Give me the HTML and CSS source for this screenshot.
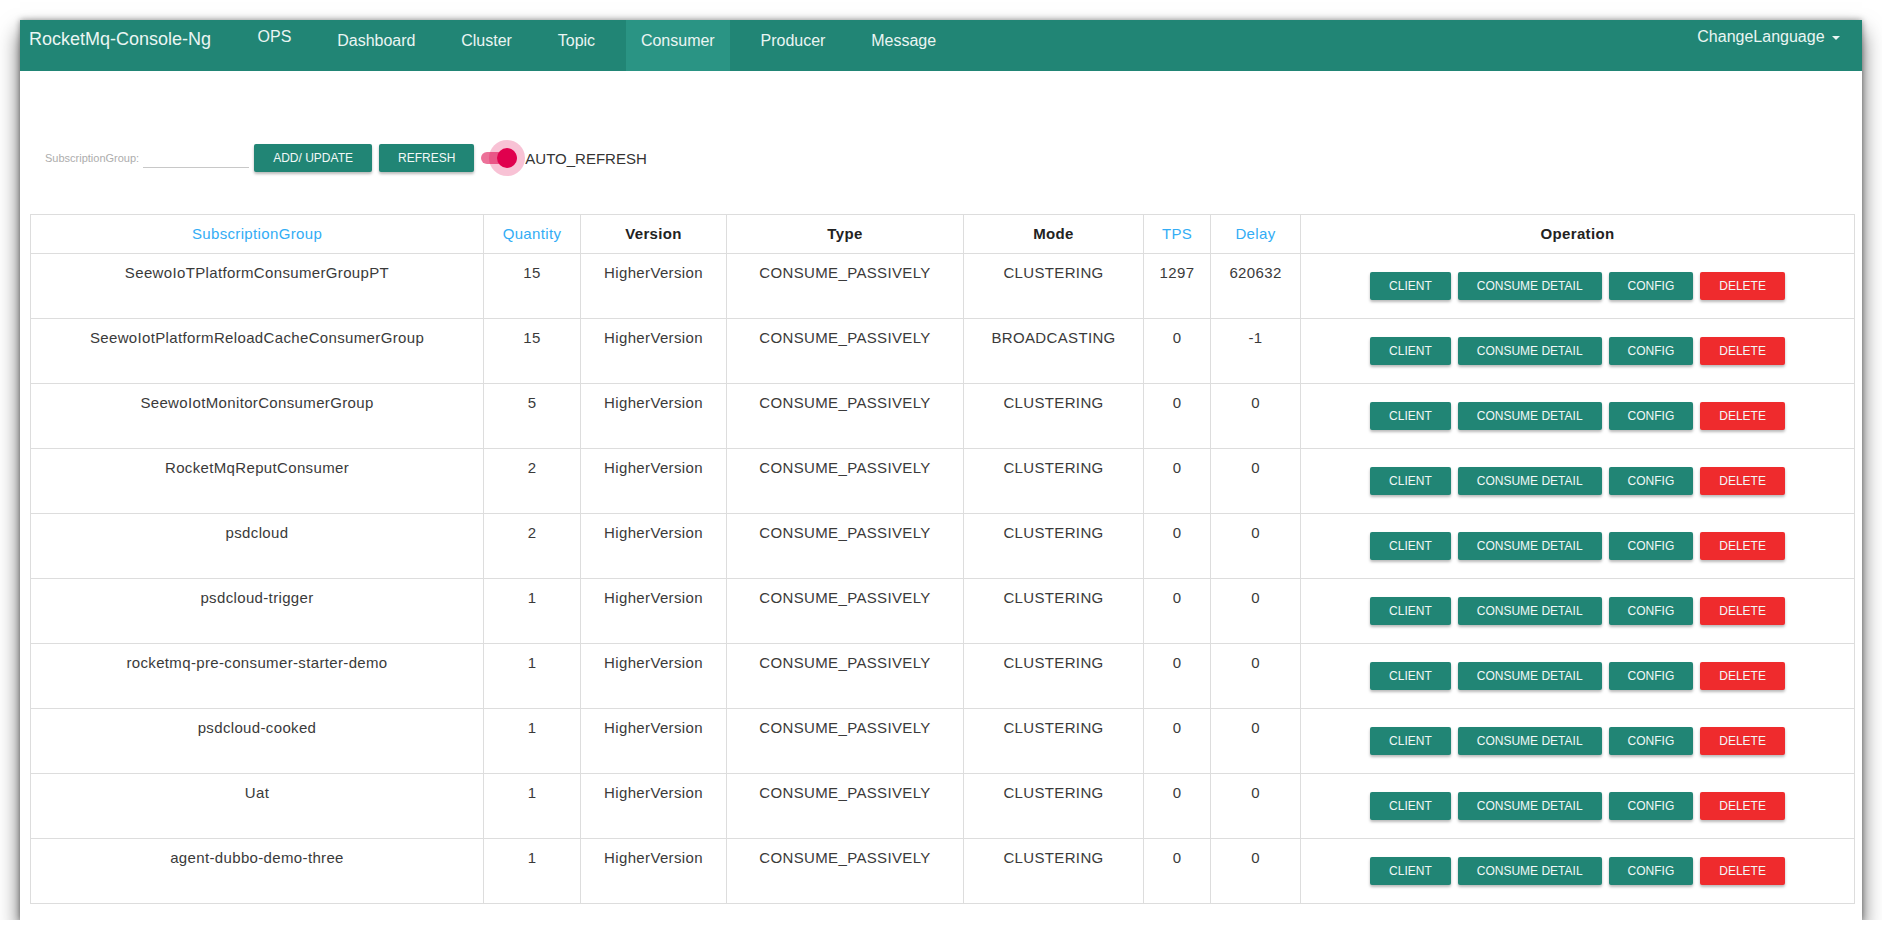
FILE: index.html
```html
<!DOCTYPE html>
<html>
<head>
<meta charset="utf-8">
<link rel="stylesheet" href="styles.css">
</head>
<body>
<div class="window">
  <nav class="navbar">
    <div class="brand">RocketMq-Console-Ng</div>
    <div class="nav-item nav-ops">OPS</div>
    <div class="nav-item">Dashboard</div>
    <div class="nav-item">Cluster</div>
    <div class="nav-item">Topic</div>
    <div class="nav-item active">Consumer</div>
    <div class="nav-item">Producer</div>
    <div class="nav-item">Message</div>
    <div class="nav-right">ChangeLanguage <span class="caret"></span></div>
  </nav>
  <main class="content">
    <div class="toolbar">
      <label class="field-label">SubscriptionGroup:</label>
      <input class="field-input" type="text">
      <button class="btn">ADD/ UPDATE</button>
      <button class="btn">REFRESH</button>
      <div class="switch">
        <div class="switch-track"></div>
        <div class="switch-halo"></div>
        <div class="switch-thumb"></div>
      </div>
      <span class="switch-label">AUTO_REFRESH</span>
    </div>
    <table class="grid">
      <colgroup>
        <col class="c1"><col class="c2"><col class="c3"><col class="c4"><col class="c5"><col class="c6"><col class="c7"><col class="c8">
      </colgroup>
      <thead>
        <tr>
          <th class="sortable">SubscriptionGroup</th>
          <th class="sortable">Quantity</th>
          <th>Version</th>
          <th>Type</th>
          <th>Mode</th>
          <th class="sortable">TPS</th>
          <th class="sortable">Delay</th>
          <th>Operation</th>
        </tr>
      </thead>
      <tbody>
        <tr><td>SeewoIoTPlatformConsumerGroupPT</td><td>15</td><td>HigherVersion</td><td>CONSUME_PASSIVELY</td><td>CLUSTERING</td><td>1297</td><td>620632</td><td class="op"><div class="op-buttons"><button class="btn">CLIENT</button><button class="btn">CONSUME DETAIL</button><button class="btn">CONFIG</button><button class="btn danger">DELETE</button></div></td></tr>
        <tr><td>SeewoIotPlatformReloadCacheConsumerGroup</td><td>15</td><td>HigherVersion</td><td>CONSUME_PASSIVELY</td><td>BROADCASTING</td><td>0</td><td>-1</td><td class="op"><div class="op-buttons"><button class="btn">CLIENT</button><button class="btn">CONSUME DETAIL</button><button class="btn">CONFIG</button><button class="btn danger">DELETE</button></div></td></tr>
        <tr><td>SeewoIotMonitorConsumerGroup</td><td>5</td><td>HigherVersion</td><td>CONSUME_PASSIVELY</td><td>CLUSTERING</td><td>0</td><td>0</td><td class="op"><div class="op-buttons"><button class="btn">CLIENT</button><button class="btn">CONSUME DETAIL</button><button class="btn">CONFIG</button><button class="btn danger">DELETE</button></div></td></tr>
        <tr><td>RocketMqReputConsumer</td><td>2</td><td>HigherVersion</td><td>CONSUME_PASSIVELY</td><td>CLUSTERING</td><td>0</td><td>0</td><td class="op"><div class="op-buttons"><button class="btn">CLIENT</button><button class="btn">CONSUME DETAIL</button><button class="btn">CONFIG</button><button class="btn danger">DELETE</button></div></td></tr>
        <tr><td>psdcloud</td><td>2</td><td>HigherVersion</td><td>CONSUME_PASSIVELY</td><td>CLUSTERING</td><td>0</td><td>0</td><td class="op"><div class="op-buttons"><button class="btn">CLIENT</button><button class="btn">CONSUME DETAIL</button><button class="btn">CONFIG</button><button class="btn danger">DELETE</button></div></td></tr>
        <tr><td>psdcloud-trigger</td><td>1</td><td>HigherVersion</td><td>CONSUME_PASSIVELY</td><td>CLUSTERING</td><td>0</td><td>0</td><td class="op"><div class="op-buttons"><button class="btn">CLIENT</button><button class="btn">CONSUME DETAIL</button><button class="btn">CONFIG</button><button class="btn danger">DELETE</button></div></td></tr>
        <tr><td>rocketmq-pre-consumer-starter-demo</td><td>1</td><td>HigherVersion</td><td>CONSUME_PASSIVELY</td><td>CLUSTERING</td><td>0</td><td>0</td><td class="op"><div class="op-buttons"><button class="btn">CLIENT</button><button class="btn">CONSUME DETAIL</button><button class="btn">CONFIG</button><button class="btn danger">DELETE</button></div></td></tr>
        <tr><td>psdcloud-cooked</td><td>1</td><td>HigherVersion</td><td>CONSUME_PASSIVELY</td><td>CLUSTERING</td><td>0</td><td>0</td><td class="op"><div class="op-buttons"><button class="btn">CLIENT</button><button class="btn">CONSUME DETAIL</button><button class="btn">CONFIG</button><button class="btn danger">DELETE</button></div></td></tr>
        <tr><td>Uat</td><td>1</td><td>HigherVersion</td><td>CONSUME_PASSIVELY</td><td>CLUSTERING</td><td>0</td><td>0</td><td class="op"><div class="op-buttons"><button class="btn">CLIENT</button><button class="btn">CONSUME DETAIL</button><button class="btn">CONFIG</button><button class="btn danger">DELETE</button></div></td></tr>
        <tr><td>agent-dubbo-demo-three</td><td>1</td><td>HigherVersion</td><td>CONSUME_PASSIVELY</td><td>CLUSTERING</td><td>0</td><td>0</td><td class="op"><div class="op-buttons"><button class="btn">CLIENT</button><button class="btn">CONSUME DETAIL</button><button class="btn">CONFIG</button><button class="btn danger">DELETE</button></div></td></tr>
      </tbody>
    </table>
  </main>
</div>
</body>
</html>
```
FILE: styles.css
```css
* { box-sizing: border-box; }
html, body {
  margin: 0;
  padding: 0;
  background: #ffffff;
  font-family: "Liberation Sans", Arial, Helvetica, sans-serif;
}
body { padding: 20px 0 0 20px; }

.window {
  width: 1842px;
  height: 900px;
  background: #ffffff;
  overflow: hidden;
  box-shadow: 0 12px 20px rgba(0, 0, 0, 0.6), 0 0 6px rgba(0, 0, 0, 0.4);
}

/* NAVBAR */
.navbar {
  display: flex;
  align-items: stretch;
  height: 51px;
  background: #218575;
  color: #eaf5f3;
}
.brand {
  flex: none;
  font-size: 18px;
  line-height: 20px;
  padding: 9px 15px 0 9px;
  white-space: nowrap;
}
.nav-item {
  flex: none;
  font-size: 16px;
  line-height: 20px;
  padding: 11px 15px 0 15px;
  margin-left: 15.8px;
  white-space: nowrap;
}
.nav-item.nav-ops { padding-top: 7px; margin-left: 16.5px; }
.nav-item.active { background: #2a9484; }
.nav-right {
  margin-left: auto;
  font-size: 16px;
  line-height: 20px;
  padding: 7px 22px 0 15px;
  white-space: nowrap;
}
.caret {
  display: inline-block;
  width: 0;
  height: 0;
  margin-left: 3px;
  vertical-align: middle;
  border-top: 4px solid #eaf5f3;
  border-left: 4px solid transparent;
  border-right: 4px solid transparent;
}

/* CONTENT */
.content {
  padding: 73px 8px 0 10px;
}
.toolbar {
  display: flex;
  align-items: center;
  height: 28px;
  padding-left: 15px;
}
.field-label {
  font-size: 11px;
  color: #adadad;
}
.field-input {
  width: 106px;
  height: 20px;
  margin: 0 5px 0 4px;
  border: none;
  border-bottom: 1px solid #c8c8c8;
  outline: none;
  background: transparent;
  padding: 0;
}
.btn {
  height: 28px;
  padding: 0 19px;
  border: none;
  border-radius: 2px;
  background: #218575;
  color: #f2f8f7;
  font-family: "Liberation Sans", Arial, Helvetica, sans-serif;
  font-size: 12px;
  line-height: 28px;
  white-space: nowrap;
  box-shadow: 0 2px 3px rgba(0, 0, 0, 0.28);
  cursor: pointer;
}
.toolbar .btn + .btn { margin-left: 7px; }
.btn.danger { background: #ef2b2d; }

.switch {
  position: relative;
  width: 36px;
  height: 28px;
  margin-left: 7px;
}
.switch-track {
  position: absolute;
  left: 0;
  top: 8px;
  width: 36px;
  height: 12px;
  border-radius: 6px;
  background: #ec7299;
}
.switch-halo {
  position: absolute;
  left: 8px;
  top: -4px;
  width: 36px;
  height: 36px;
  border-radius: 50%;
  background: rgba(224, 0, 78, 0.24);
}
.switch-thumb {
  position: absolute;
  left: 16px;
  top: 4px;
  width: 20px;
  height: 20px;
  border-radius: 50%;
  background: #e0004e;
}
.switch-label {
  margin-left: 8px;
  font-size: 15px;
  color: #333333;
}

/* TABLE */
.grid {
  margin-top: 42px;
  width: 1824px;
  border-collapse: collapse;
  table-layout: fixed;
  font-size: 15px;
  letter-spacing: 0.35px;
  color: #3a3a3a;
}
.c1 { width: 453px; }
.c2 { width: 97px; }
.c3 { width: 146px; }
.c4 { width: 237px; }
.c5 { width: 180px; }
.c6 { width: 67px; }
.c7 { width: 90px; }
.c8 { width: 554px; }

.grid th, .grid td {
  border: 1px solid #dddddd;
  text-align: center;
  white-space: nowrap;
}
.grid th {
  height: 39px;
  padding: 0 4px;
  line-height: 18px;
  font-weight: bold;
  color: #222222;
}
.grid th.sortable {
  font-weight: normal;
  color: #33adf5;
}
.grid td {
  height: 65px;
  padding: 10px 4px;
  line-height: 18px;
  vertical-align: top;
}
.grid td.op { letter-spacing: normal; }
.op-buttons {
  display: flex;
  justify-content: center;
  gap: 7px;
  padding: 8px 0;
}
```
